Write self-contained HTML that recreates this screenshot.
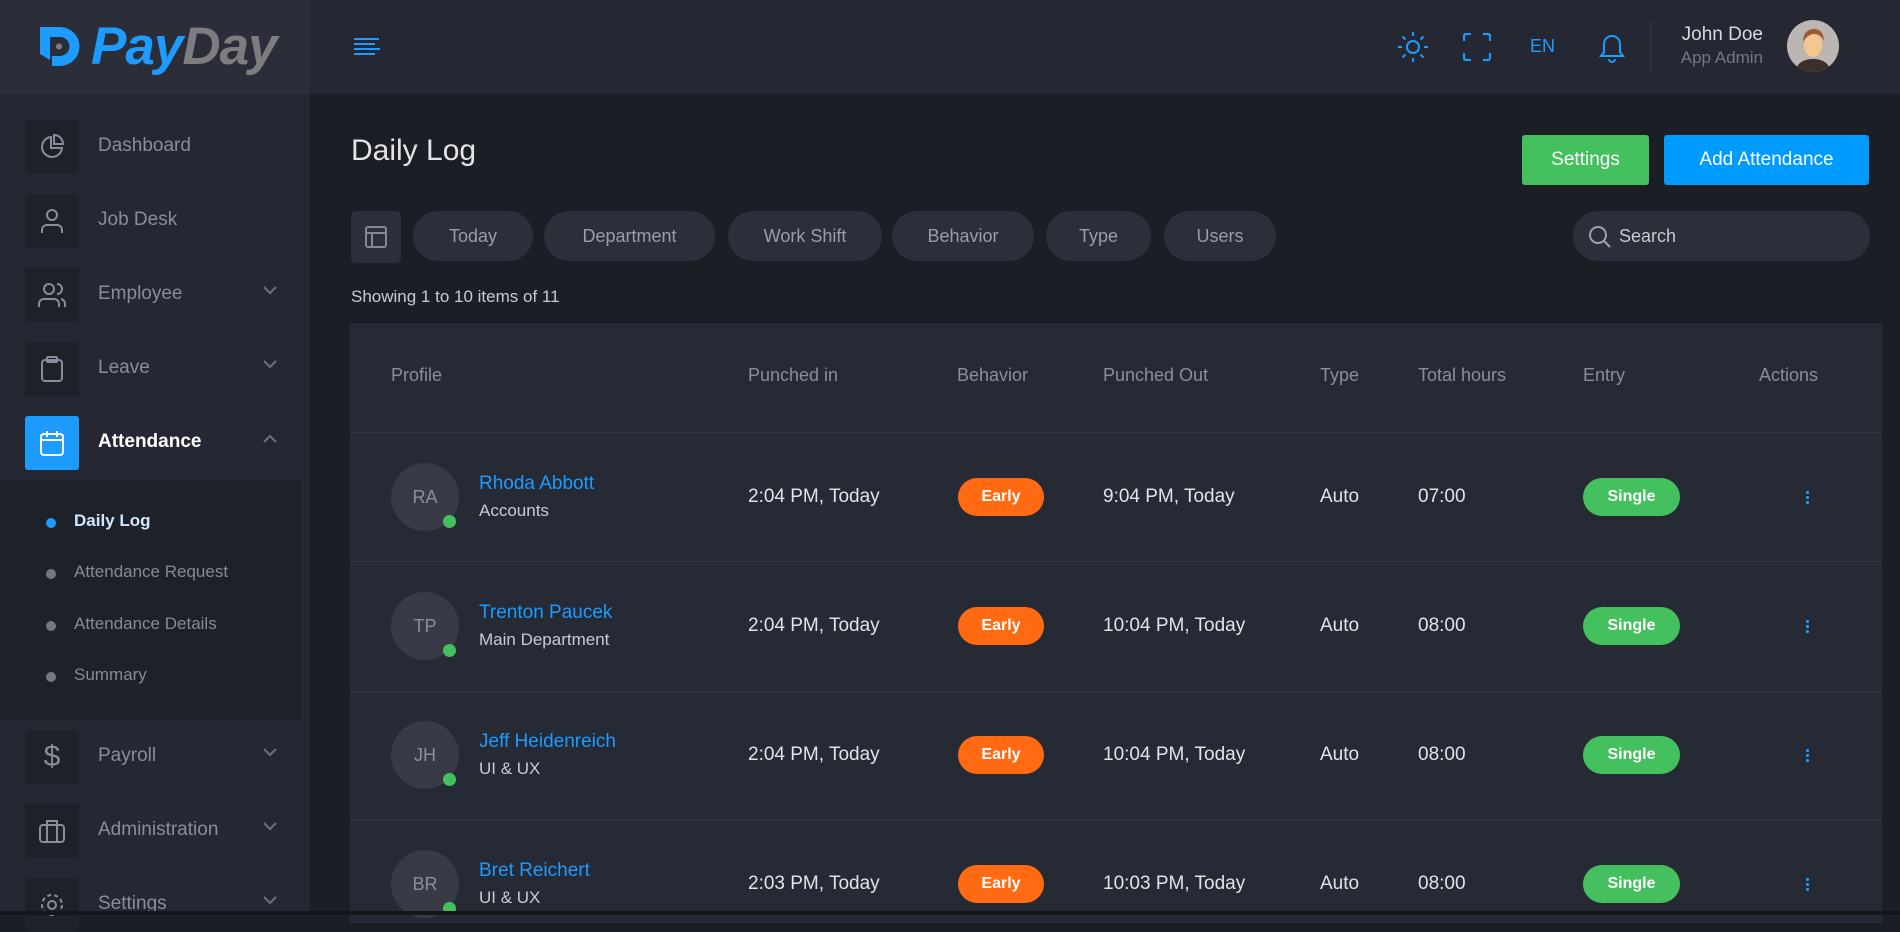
<!DOCTYPE html>
<html><head><meta charset="utf-8"><style>
*{box-sizing:border-box;margin:0;padding:0}
body{width:1900px;height:915px;overflow:hidden;background:#1c1e25;font-family:"Liberation Sans",sans-serif;position:relative}
.abs{position:absolute}
.sb{left:0;top:0;width:310px;height:915px;background:#252832}
.logo{left:0;top:0;width:310px;height:94px;background:#2b2e39}
.top{left:310px;top:0;width:1590px;height:94px;background:#252832}
.item{position:absolute;left:25px;width:270px;height:54px}
.ib{position:absolute;left:0;top:0;width:54px;height:54px;background:#1f2129;border-radius:3px;display:flex;align-items:center;justify-content:center}
.it{position:absolute;left:73px;top:15px;font-size:19px;color:#8a8d99}
.chev{position:absolute;left:238px;top:18px}
.sub{left:0;top:480px;width:302px;height:240px;background:#1f2129}
.sl{position:absolute;left:74px;font-size:17px;color:#868a96}
.dot{position:absolute;left:46px;width:10px;height:10px;border-radius:50%;background:#747884}
.pill{position:absolute;top:211px;height:50px;border-radius:25px;background:#2c2f39;color:#9a9da8;font-size:18px;line-height:50px;text-align:center}
.tbl{left:350px;top:323px;width:1532px;height:600px;background:#262a35}
.th{position:absolute;top:365px;font-size:18px;color:#8a8e98}
.row{position:absolute;left:350px;width:1532px;border-top:1px solid #333744}
.td{position:absolute;font-size:19px;color:#e2e3e7}
.av{position:absolute;width:68px;height:68px;border-radius:50%;background:#383b45;color:#8c8f99;font-size:18px;line-height:68px;text-align:center}
.on{position:absolute;width:13px;height:13px;border-radius:50%;background:#44c15e}
.nm{position:absolute;font-size:19px;color:#1e9bff}
.dp{position:absolute;font-size:17px;color:#c9cbd1}
.early{position:absolute;left:958px;width:86px;height:38px;border-radius:19px;background:#ff6a13;color:#fff;font-size:16px;font-weight:bold;line-height:38px;text-align:center}
.single{position:absolute;left:1583px;width:97px;height:38px;border-radius:19px;background:#44c15e;color:#fff;font-size:16px;font-weight:bold;line-height:38px;text-align:center}
.act{position:absolute;left:1806px;width:3px}
.act i{display:block;width:3px;height:3px;background:#1e9bff;margin-bottom:2px;border-radius:1px}
</style></head><body>
<div class="abs sb"></div>
<div class="abs logo"></div>
<div class="abs top"></div>
<!-- logo -->
<svg class="abs" style="left:38px;top:26px" width="44" height="42" viewBox="0 0 44 42"><path d="M2 1 H22 A19 19 0 0 1 22 40 H14 V30 H22 A9 9 0 0 0 22 11 H12 V34 L2 28 Z" fill="#1e9bff"/><circle cx="21" cy="20.5" r="3.5" fill="#2b2e39"/><circle cx="21" cy="20.5" r="3" fill="#7e7f83"/></svg>
<div class="abs" style="left:91px;top:16px;font-size:53px;font-weight:bold;font-style:italic;letter-spacing:-1px"><span style="color:#1e9bff">Pay</span><span style="color:#7d7d80">Day</span></div>
<!-- hamburger -->
<svg class="abs" style="left:353px;top:37px" width="28" height="20"><g stroke="#1e9bff" stroke-width="2"><line x1="1" y1="2" x2="26" y2="2"/><line x1="1" y1="7" x2="22" y2="7"/><line x1="1" y1="12" x2="27" y2="12"/><line x1="1" y1="17" x2="22" y2="17"/></g></svg>
<!-- top icons -->
<svg class="abs" style="left:1397px;top:31px" width="32" height="32" viewBox="0 0 32 32" fill="none" stroke="#1e9bff" stroke-width="2"><circle cx="16" cy="16" r="6"/><path d="M16 1v4M16 27v4M1 16h4M27 16h4M5.5 5.5l3 3M23.5 23.5l3 3M5.5 26.5l3-3M23.5 8.5l3-3"/></svg>
<svg class="abs" style="left:1463px;top:33px" width="28" height="28" viewBox="0 0 28 28" fill="none" stroke="#1e9bff" stroke-width="2.2"><path d="M1 8V3a2 2 0 0 1 2-2h5M20 1h5a2 2 0 0 1 2 2v5M27 20v5a2 2 0 0 1-2 2h-5M8 27H3a2 2 0 0 1-2-2v-5"/></svg>
<div class="abs" style="left:1530px;top:36px;font-size:18px;color:#1e9bff">EN</div>
<svg class="abs" style="left:1597px;top:31px" width="30" height="32" viewBox="0 0 30 32" fill="none" stroke="#1e9bff" stroke-width="2"><path d="M4 25h22l-3-4V13a8 8 0 0 0-16 0v8z"/><path d="M12 28a3 3 0 0 0 6 0"/></svg>
<div class="abs" style="left:1650px;top:23px;width:1px;height:48px;background:#353945"></div>
<div class="abs" style="left:1660px;top:24px;width:103px;text-align:right;font-size:19px;color:#d8d9dd">John Doe</div>
<div class="abs" style="left:1640px;top:48px;width:123px;text-align:right;font-size:17px;color:#747884">App Admin</div>
<svg class="abs" style="left:1787px;top:20px" width="52" height="52" viewBox="0 0 52 52"><clipPath id="c"><circle cx="26" cy="26" r="26"/></clipPath><g clip-path="url(#c)"><rect width="52" height="52" fill="#bcb6b3"/><path d="M8 52c2-10 10-13 18-13s16 3 18 13z" fill="#3b2f2a"/><ellipse cx="26" cy="25" rx="9" ry="12" fill="#f2c88f"/><path d="M16 22c0-10 6-13 11-13s10 3 10 12c-2-5-6-7-10-7s-8 3-11 8z" fill="#9a5b34"/></g></svg>
<!-- sidebar items -->
<div class="item" style="top:120px"><div class="ib"><svg width="26" height="26" viewBox="0 0 26 26" fill="none" stroke="#8a8d99" stroke-width="2"><path d="M12 3a10 10 0 1 0 11 11H12z"/><path d="M15 1v9h9a9 9 0 0 0-9-9z"/></svg></div><div class="it">Dashboard</div></div>
<div class="item" style="top:194px"><div class="ib"><svg width="24" height="26" viewBox="0 0 24 26" fill="none" stroke="#8a8d99" stroke-width="2"><circle cx="12" cy="7" r="5"/><path d="M2 25v-3a5 5 0 0 1 5-5h10a5 5 0 0 1 5 5v3"/></svg></div><div class="it">Job Desk</div></div>
<div class="item" style="top:268px"><div class="ib"><svg width="28" height="26" viewBox="0 0 28 26" fill="none" stroke="#8a8d99" stroke-width="2"><circle cx="11" cy="7" r="5"/><path d="M1 25v-3a5 5 0 0 1 5-5h10a5 5 0 0 1 5 5v3M19 2a5 5 0 0 1 0 10M23 17a5 5 0 0 1 4 5v3"/></svg></div><div class="it">Employee</div><svg class="chev" width="14" height="9"><path d="M1 1l6 6 6-6" stroke="#6d717c" stroke-width="2" fill="none"/></svg></div>
<div class="item" style="top:342px"><div class="ib"><svg width="22" height="26" viewBox="0 0 22 26" fill="none" stroke="#8a8d99" stroke-width="2"><rect x="1" y="4" width="20" height="21" rx="3"/><rect x="6" y="1" width="10" height="5" rx="1"/></svg></div><div class="it">Leave</div><svg class="chev" width="14" height="9"><path d="M1 1l6 6 6-6" stroke="#6d717c" stroke-width="2" fill="none"/></svg></div>
<div class="item" style="top:416px"><div class="ib" style="background:#1e9bff"><svg width="24" height="26" viewBox="0 0 24 26" fill="none" stroke="#fff" stroke-width="2"><rect x="1" y="4" width="22" height="21" rx="3"/><path d="M1 10h22M7 1v6M17 1v6"/></svg></div><div class="it" style="color:#fff;font-weight:bold">Attendance</div><svg class="chev" width="14" height="9"><path d="M1 8l6-6 6 6" stroke="#6d717c" stroke-width="2" fill="none"/></svg></div>
<div class="abs sub"></div>
<div class="abs" style="left:0;top:480px;width:310px;height:240px">
<div class="dot" style="top:38px;background:#1e9bff"></div><div class="sl" style="top:31px;color:#cfe6ff;font-weight:bold">Daily Log</div>
<div class="dot" style="top:89px"></div><div class="sl" style="top:82px">Attendance Request</div>
<div class="dot" style="top:141px"></div><div class="sl" style="top:134px">Attendance Details</div>
<div class="dot" style="top:192px"></div><div class="sl" style="top:185px">Summary</div>
</div>
<div class="item" style="top:730px"><div class="ib"><span style="color:#8a8d99;font-size:30px">$</span></div><div class="it">Payroll</div><svg class="chev" width="14" height="9"><path d="M1 1l6 6 6-6" stroke="#6d717c" stroke-width="2" fill="none"/></svg></div>
<div class="item" style="top:804px"><div class="ib"><svg width="26" height="24" viewBox="0 0 26 24" fill="none" stroke="#8a8d99" stroke-width="2"><rect x="1" y="6" width="24" height="17" rx="3"/><path d="M8 6V2h10v4M8 6v17M18 6v17"/></svg></div><div class="it">Administration</div><svg class="chev" width="14" height="9"><path d="M1 1l6 6 6-6" stroke="#6d717c" stroke-width="2" fill="none"/></svg></div>
<div class="item" style="top:878px"><div class="ib"><svg width="26" height="26" viewBox="0 0 26 26" fill="none" stroke="#8a8d99" stroke-width="2"><circle cx="13" cy="13" r="4"/><circle cx="13" cy="13" r="10" stroke-dasharray="4 3"/></svg></div><div class="it">Settings</div><svg class="chev" width="14" height="9"><path d="M1 1l6 6 6-6" stroke="#6d717c" stroke-width="2" fill="none"/></svg></div>
<div class="abs" style="left:0;top:911px;width:1900px;height:4px;background:#14161b"></div>
<!-- main -->
<div class="abs" style="left:351px;top:134px;font-size:30px;color:#e3e4e8">Daily Log</div>
<div class="abs" style="left:1522px;top:135px;width:127px;height:50px;background:#44c15e;border-radius:3px;color:#fff;font-size:19px;line-height:50px;text-align:center">Settings</div>
<div class="abs" style="left:1664px;top:135px;width:205px;height:50px;background:#009bff;border-radius:3px;color:#fff;font-size:19px;line-height:50px;text-align:center">Add Attendance</div>
<div class="abs" style="left:351px;top:211px;width:50px;height:52px;background:#2c2f39;border-radius:5px;display:flex;align-items:center;justify-content:center"><svg width="22" height="22" viewBox="0 0 22 22" fill="none" stroke="#858893" stroke-width="2"><rect x="1" y="1" width="20" height="20" rx="2"/><path d="M1 7h20M7 7v14"/></svg></div>
<div class="pill" style="left:413px;width:120px">Today</div>
<div class="pill" style="left:544px;width:171px">Department</div>
<div class="pill" style="left:728px;width:154px">Work Shift</div>
<div class="pill" style="left:892px;width:142px">Behavior</div>
<div class="pill" style="left:1046px;width:105px">Type</div>
<div class="pill" style="left:1164px;width:112px">Users</div>
<div class="pill" style="left:1573px;width:297px;text-align:left;padding-left:46px;color:#c8cad0">Search</div>
<svg class="abs" style="left:1588px;top:225px" width="24" height="24" viewBox="0 0 24 24" fill="none" stroke="#a0a3ad" stroke-width="2"><circle cx="10" cy="10" r="8"/><path d="M16 16l6 6"/></svg>
<div class="abs" style="left:351px;top:287px;font-size:17px;color:#c9cbd1">Showing 1 to 10 items of 11</div>
<div class="abs tbl"></div>
<div class="th" style="left:391px">Profile</div>
<div class="th" style="left:748px">Punched in</div>
<div class="th" style="left:957px">Behavior</div>
<div class="th" style="left:1103px">Punched Out</div>
<div class="th" style="left:1320px">Type</div>
<div class="th" style="left:1418px">Total hours</div>
<div class="th" style="left:1583px">Entry</div>
<div class="th" style="left:1759px">Actions</div>

<div class="row" style="top:432px"></div>
<div class="row" style="top:561px"></div>
<div class="row" style="top:691px"></div>
<div class="row" style="top:820px"></div>

<div class="av" style="left:391px;top:463px">RA</div><div class="on" style="left:443px;top:515px"></div>
<div class="nm" style="left:479px;top:473px">Rhoda Abbott</div><div class="dp" style="left:479px;top:501px">Accounts</div>
<div class="td" style="left:748px;top:486px">2:04 PM, Today</div><div class="early" style="top:478px">Early</div>
<div class="td" style="left:1103px;top:486px">9:04 PM, Today</div><div class="td" style="left:1320px;top:486px">Auto</div><div class="td" style="left:1418px;top:486px">07:00</div>
<div class="single" style="top:478px">Single</div><div class="act" style="top:491px"><i></i><i></i><i></i></div>

<div class="av" style="left:391px;top:592px">TP</div><div class="on" style="left:443px;top:644px"></div>
<div class="nm" style="left:479px;top:602px">Trenton Paucek</div><div class="dp" style="left:479px;top:630px">Main Department</div>
<div class="td" style="left:748px;top:615px">2:04 PM, Today</div><div class="early" style="top:607px">Early</div>
<div class="td" style="left:1103px;top:615px">10:04 PM, Today</div><div class="td" style="left:1320px;top:615px">Auto</div><div class="td" style="left:1418px;top:615px">08:00</div>
<div class="single" style="top:607px">Single</div><div class="act" style="top:620px"><i></i><i></i><i></i></div>

<div class="av" style="left:391px;top:721px">JH</div><div class="on" style="left:443px;top:773px"></div>
<div class="nm" style="left:479px;top:731px">Jeff Heidenreich</div><div class="dp" style="left:479px;top:759px">UI &amp; UX</div>
<div class="td" style="left:748px;top:744px">2:04 PM, Today</div><div class="early" style="top:736px">Early</div>
<div class="td" style="left:1103px;top:744px">10:04 PM, Today</div><div class="td" style="left:1320px;top:744px">Auto</div><div class="td" style="left:1418px;top:744px">08:00</div>
<div class="single" style="top:736px">Single</div><div class="act" style="top:749px"><i></i><i></i><i></i></div>

<div class="av" style="left:391px;top:850px">BR</div><div class="on" style="left:443px;top:902px"></div>
<div class="nm" style="left:479px;top:860px">Bret Reichert</div><div class="dp" style="left:479px;top:888px">UI &amp; UX</div>
<div class="td" style="left:748px;top:873px">2:03 PM, Today</div><div class="early" style="top:865px">Early</div>
<div class="td" style="left:1103px;top:873px">10:03 PM, Today</div><div class="td" style="left:1320px;top:873px">Auto</div><div class="td" style="left:1418px;top:873px">08:00</div>
<div class="single" style="top:865px">Single</div><div class="act" style="top:878px"><i></i><i></i><i></i></div>
<div class="abs" style="left:310px;top:911px;width:1590px;height:4px;background:#14161b"></div>
</body></html>
